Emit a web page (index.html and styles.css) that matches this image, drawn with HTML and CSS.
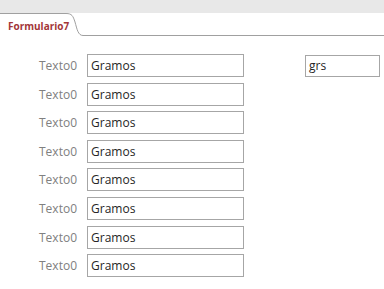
FILE: index.html
```html
<!DOCTYPE html>
<html lang="es">
<head>
  <meta charset="UTF-8" />
  <title>Formulario7</title>
  <link rel="stylesheet" href="styles.css">
</head>
<body>
  <div class="topbar"></div>
  <div class="tabstrip">
    <svg class="tabline" width="384" height="24" viewBox="0 0 384 24">
      <path d="M0 0.5 H66 C72 0.5 73 3 75 9 C77 16 78 22.5 83 22.5 H384" fill="none" stroke="#a0a0a0" stroke-width="1" />
    </svg>
    <span class="tab-title">Formulario7</span>
  </div>

  <div class="form">
    <div class="row">
      <span class="label">Texto0</span>
      <span class="box">Gramos</span>
      <span class="box small">grs</span>
    </div>
    <div class="row"><span class="label">Texto0</span><span class="box">Gramos</span></div>
    <div class="row"><span class="label">Texto0</span><span class="box">Gramos</span></div>
    <div class="row"><span class="label">Texto0</span><span class="box">Gramos</span></div>
    <div class="row"><span class="label">Texto0</span><span class="box">Gramos</span></div>
    <div class="row"><span class="label">Texto0</span><span class="box">Gramos</span></div>
    <div class="row"><span class="label">Texto0</span><span class="box">Gramos</span></div>
    <div class="row"><span class="label">Texto0</span><span class="box">Gramos</span></div>
  </div>
</body>
</html>
```

FILE: styles.css
```css
/* general */
body {
  margin: 0;
  background: #fff;
  font-family: 'Open Sans', 'Noto Sans', sans-serif;
  color: #333;
}
.topbar {
  height: 13px;
  background: #e8e8e8;
}
.tabstrip {
  position: relative;
  height: 23px;
}
.tabline {
  position: absolute;
  left: 0;
  top: 0;
  display: block;
}
.tab-title {
  position: relative;
  display: inline-block;
  margin: 6px 0 0 8px;
  font-size: 10px;
  font-weight: bold;
  color: #a33638;
  line-height: 13px;
}

/* form */
.form {
  display: flex;
  flex-direction: column;
  gap: 5.6px;
  padding-top: 18px;
}
.row {
  display: flex;
  align-items: center;
}
.label {
  width: 77px;
  margin-right: 10px;
  text-align: right;
  font-size: 12px;
  color: #808080;
}
.box {
  box-sizing: border-box;
  width: 157px;
  height: 23px;
  border: 1px solid #a6a6a6;
  padding: 0 0 0 3px;
  font-size: 12px;
  line-height: 21px;
  color: #262626;
}
.box.small {
  width: 75px;
  height: 22px;
  line-height: 20px;
  margin-left: 61px;
}
```
